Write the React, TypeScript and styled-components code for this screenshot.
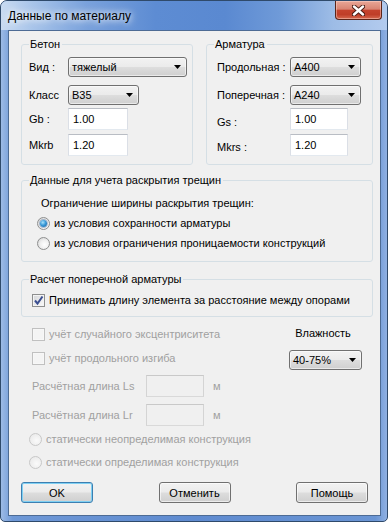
import { FC, ReactNode } from "react";
import styled, { createGlobalStyle, css } from "styled-components";

const colors = {
  face: "#f0f0f0",
  text: "#000000",
  disabled: "#a0a0a0",
  groupLine: "#d5dfe5",
  frameDark: "#2f4a6b",
};

const GlobalStyle = createGlobalStyle`
  html, body {
    margin: 0;
    padding: 0;
    background: #ffffff;
  }
  body {
    font-family: "Liberation Sans", Arial, sans-serif;
    font-size: 11px;
    color: ${colors.text};
  }
  * {
    box-sizing: border-box;
  }
`;

const Window = styled.div`
  width: 388px;
  height: 522px;
  display: flex;
  flex-direction: column;
  border: 1px solid ${colors.frameDark};
  border-radius: 7px 7px 5px 5px;
  overflow: hidden;
  background: linear-gradient(90deg, #9dbbe6 0%, #6e98d6 3%, #5f8bd0 50%, #6a95d4 97%, #8fb0e2 100%);
`;

const TitleBar = styled.div`
  height: 29px;
  flex: none;
  display: flex;
  align-items: flex-start;
  padding-left: 7px;
  background: linear-gradient(
    90deg,
    #c9dbf1 0%,
    #a9c5ea 8%,
    #7aa2dc 22%,
    #5d8cd3 40%,
    #5a89d1 58%,
    #6f9ad8 72%,
    #9dbce6 86%,
    #b3cbee 100%
  );
`;

const Title = styled.span`
  font-size: 12px;
  line-height: 30px;
  color: #000;
  text-shadow: 0 0 6px #ffffff, 0 0 10px rgba(255, 255, 255, 0.9);
`;

const CloseButton = styled.div`
  margin-left: auto;
  margin-right: 5px;
  width: 47px;
  height: 19px;
  display: flex;
  align-items: center;
  justify-content: center;
  border: 1px solid #5b2519;
  border-top: none;
  border-radius: 0 0 4px 4px;
  background: linear-gradient(#e9a797 0%, #d98473 45%, #c5432d 52%, #bf3e28 75%, #d5694f 100%);
  box-shadow: inset 0 0 0 1px rgba(255, 220, 210, 0.45);
`;

const CloseGlyph: FC = () => (
  <svg width="13" height="11" viewBox="0 0 13 11">
    <path d="M2 1.5 L11 9.5 M11 1.5 L2 9.5" stroke="#4a1d15" strokeWidth="4.4" strokeLinecap="round" />
    <path d="M2 1.5 L11 9.5 M11 1.5 L2 9.5" stroke="#ffffff" strokeWidth="2.4" strokeLinecap="round" />
  </svg>
);

const Client = styled.div`
  flex: 1;
  margin: 0 6px 5px 7px;
  border: 1px solid #4d6b94;
  background: ${colors.face};
  display: flex;
  flex-direction: column;
  padding: 7px 7px 0 12px;
`;

const TopRow = styled.div`
  display: flex;
  gap: 13px;
`;

const Group = styled.fieldset<{ $w?: number; $mt?: number; $pt: number; $pb: number }>`
  margin: ${(p) => p.$mt ?? 0}px 0 0 0;
  min-width: 0;
  border: 1px solid ${colors.groupLine};
  border-radius: 3px;
  padding: ${(p) => p.$pt}px 7px ${(p) => p.$pb}px 7px;
  ${(p) =>
    p.$w &&
    css`
      width: ${p.$w}px;
    `}
`;

const Legend = styled.legend`
  padding: 0 2px 0 1px;
  margin: 0;
  line-height: 13px;
  font-size: 11px;
`;

const FieldRow = styled.div<{ $mt?: number; $indent?: number }>`
  display: flex;
  align-items: center;
  margin-top: ${(p) => p.$mt ?? 0}px;
  padding-left: ${(p) => p.$indent ?? 0}px;
`;

const FieldLabel = styled.span<{ $w: number; $disabled?: boolean; $drop?: number }>`
  width: ${(p) => p.$w}px;
  flex: none;
  white-space: nowrap;
  padding-top: ${(p) => (p.$drop ?? 0) * 2}px;
  color: ${(p) => (p.$disabled ? colors.disabled : colors.text)};
`;

const Combo = styled.div<{ $w: number }>`
  width: ${(p) => p.$w}px;
  height: 20px;
  flex: none;
  display: flex;
  align-items: center;
  padding: 0 5px 0 3px;
  border: 1px solid #707070;
  border-radius: 3px;
  background: linear-gradient(#f2f2f2 0%, #ebebeb 48%, #dddddd 52%, #cfcfcf 100%);
  box-shadow: inset 0 0 0 1px rgba(255, 255, 255, 0.55);
`;

const ComboText = styled.span`
  flex: 1;
  white-space: nowrap;
`;

const ComboArrow: FC = () => (
  <svg width="7" height="4" viewBox="0 0 7 4">
    <polygon points="0,0 7,0 3.5,4" fill="#000" />
  </svg>
);

const Edit = styled.div<{ $w: number; $disabled?: boolean }>`
  width: ${(p) => p.$w}px;
  height: 22px;
  flex: none;
  display: flex;
  align-items: center;
  padding-left: 4px;
  border: 1px solid;
  border-color: ${(p) =>
    p.$disabled ? "#c9c9c9 #d4d4d4 #d9d9d9 #d4d4d4" : "#b9bdc4 #dbdfe6 #e3e9ef #dbdfe6"};
  background: ${(p) => (p.$disabled ? colors.face : "#ffffff")};
`;

const OptionRow = styled.label<{ $h: number; $indent: number; $disabled?: boolean }>`
  height: ${(p) => p.$h}px;
  display: flex;
  align-items: center;
  gap: 4px;
  padding-left: ${(p) => p.$indent}px;
  white-space: nowrap;
  color: ${(p) => (p.$disabled ? colors.disabled : colors.text)};
`;

const CheckBox = styled.span<{ $disabled?: boolean }>`
  width: 13px;
  height: 13px;
  flex: none;
  display: flex;
  align-items: center;
  justify-content: center;
  border: 1px solid ${(p) => (p.$disabled ? "#c0c0c0" : "#8e8f8f")};
  background: ${(p) =>
    p.$disabled ? "#f4f4f4" : "linear-gradient(135deg, #d4d6d9 0%, #ececed 60%, #fbfbfb 100%)"};
  box-shadow: inset 0 0 0 1px ${(p) => (p.$disabled ? "#f7f7f7" : "#f4f4f4")};
`;

const CheckMark: FC = () => (
  <svg width="11" height="11" viewBox="0 0 11 11">
    <path d="M2 5.5 L4.5 8.5 L9.5 1.5" fill="none" stroke="#3b4f91" strokeWidth="2" />
  </svg>
);

const Radio = styled.span<{ $disabled?: boolean }>`
  width: 13px;
  height: 13px;
  flex: none;
  display: flex;
  align-items: center;
  justify-content: center;
  border-radius: 50%;
  border: 1px solid ${(p) => (p.$disabled ? "#c8c8c8" : "#8e8f8f")};
  background: ${(p) =>
    p.$disabled
      ? "radial-gradient(circle at 60% 60%, #fafafa 0%, #ececec 70%, #e2e2e2 100%)"
      : "radial-gradient(circle at 60% 60%, #ffffff 0%, #f0f0f0 45%, #cdcdcd 100%)"};
`;

const RadioDot = styled.span`
  width: 7px;
  height: 7px;
  border-radius: 50%;
  background: radial-gradient(circle at 40% 35%, #a9e2fb 0%, #3a9ad8 45%, #175d9e 100%);
  box-shadow: 0 0 0 1px rgba(30, 80, 140, 0.35);
`;

const Hint = styled.div`
  height: 21px;
  display: flex;
  align-items: center;
  padding-left: 12px;
`;

const LowerArea = styled.div`
  display: flex;
  margin-right: -7px;
  margin-left: -12px;
`;

const LeftCol = styled.div`
  flex: 1;
  display: flex;
  flex-direction: column;
  padding-top: 7px;
`;

const RightCol = styled.div`
  width: 73px;
  margin-right: 18px;
  padding-top: 6px;
  display: flex;
  flex-direction: column;
  align-items: center;
  gap: 7px;
`;

const Caption = styled.span`
  line-height: 20px;
  padding-right: 5px;
`;

const Unit = styled.span`
  margin-left: 9px;
  color: ${colors.disabled};
`;

const Buttons = styled.div`
  display: flex;
  justify-content: space-between;
  margin: auto 5px 12px 0;
`;

const Button = styled.button<{ $default?: boolean }>`
  width: 72px;
  height: 21px;
  padding: 0;
  font: inherit;
  color: ${colors.text};
  border: 1px solid ${(p) => (p.$default ? "#3c7fb1" : "#707070")};
  border-radius: 3px;
  background: linear-gradient(#f2f2f2 0%, #ebebeb 48%, #dddddd 52%, #cfcfcf 100%);
  box-shadow: inset 0 0 0 1px ${(p) => (p.$default ? "#7fd0f3" : "rgba(255, 255, 255, 0.6)")};
`;

type OptionProps = {
  kind: "check" | "radio";
  checked?: boolean;
  disabled?: boolean;
  h?: number;
  indent: number;
  children: ReactNode;
};

const Option: FC<OptionProps> = ({ kind, checked, disabled, h = 20, indent, children }) => (
  <OptionRow $h={h} $indent={indent} $disabled={disabled}>
    {kind === "check" ? (
      <CheckBox $disabled={disabled}>{checked && <CheckMark />}</CheckBox>
    ) : (
      <Radio $disabled={disabled}>{checked && <RadioDot />}</Radio>
    )}
    <span>{children}</span>
  </OptionRow>
);

const Select: FC<{ w: number; value: string }> = ({ w, value }) => (
  <Combo $w={w}>
    <ComboText>{value}</ComboText>
    <ComboArrow />
  </Combo>
);

const App: FC = () => (
  <>
    <GlobalStyle />
    <Window>
      <TitleBar>
        <Title>Данные по материалу</Title>
        <CloseButton>
          <CloseGlyph />
        </CloseButton>
      </TitleBar>
      <Client>
        <TopRow>
          <Group $w={172} $pt={6} $pb={8}>
            <Legend>Бетон</Legend>
            <FieldRow>
              <FieldLabel $w={39}>Вид :</FieldLabel>
              <Select w={119} value="тяжелый" />
            </FieldRow>
            <FieldRow $mt={8}>
              <FieldLabel $w={39}>Класс</FieldLabel>
              <Select w={71} value="B35" />
            </FieldRow>
            <FieldRow $mt={3}>
              <FieldLabel $w={39}>Gb :</FieldLabel>
              <Edit $w={60}>1.00</Edit>
            </FieldRow>
            <FieldRow $mt={4}>
              <FieldLabel $w={39}>Mkrb</FieldLabel>
              <Edit $w={60}>1.20</Edit>
            </FieldRow>
          </Group>
          <Group $w={167} $pt={6} $pb={8}>
            <Legend>Арматура</Legend>
            <FieldRow $indent={3}>
              <FieldLabel $w={73}>Продольная :</FieldLabel>
              <Select w={71} value="A400" />
            </FieldRow>
            <FieldRow $mt={8} $indent={3}>
              <FieldLabel $w={73}>Поперечная :</FieldLabel>
              <Select w={71} value="A240" />
            </FieldRow>
            <FieldRow $mt={3} $indent={3}>
              <FieldLabel $w={73} $drop={3}>
                Gs :
              </FieldLabel>
              <Edit $w={58}>1.00</Edit>
            </FieldRow>
            <FieldRow $mt={4} $indent={3}>
              <FieldLabel $w={73} $drop={2}>
                Mkrs :
              </FieldLabel>
              <Edit $w={58}>1.20</Edit>
            </FieldRow>
          </Group>
        </TopRow>

        <Group $mt={9} $pt={5} $pb={8}>
          <Legend>Данные для учета раскрытия трещин</Legend>
          <Hint>Ограничение ширины раскрытия трещин:</Hint>
          <Option kind="radio" checked indent={8}>
            из условия сохранности арматуры
          </Option>
          <Option kind="radio" indent={8}>
            из условия ограничения проницаемости конструкций
          </Option>
        </Group>

        <Group $mt={11} $pt={4} $pb={6}>
          <Legend>Расчет поперечной арматуры</Legend>
          <Option kind="check" checked indent={3}>
            Принимать длину элемента за расстояние между опорами
          </Option>
        </Group>

        <LowerArea>
          <LeftCol>
            <Option kind="check" disabled indent={23}>
              учёт случайного эксцентриситета
            </Option>
            <FieldRow $mt={4}>
              <Option kind="check" disabled indent={23}>
                учёт продольного изгиба
              </Option>
            </FieldRow>
            <FieldRow $mt={7} $indent={23}>
              <FieldLabel $w={114} $disabled>
                Расчётная длина Ls
              </FieldLabel>
              <Edit $w={58} $disabled />
              <Unit>м</Unit>
            </FieldRow>
            <FieldRow $mt={7} $indent={23}>
              <FieldLabel $w={114} $disabled>
                Расчётная длина Lr
              </FieldLabel>
              <Edit $w={58} $disabled />
              <Unit>м</Unit>
            </FieldRow>
            <FieldRow $mt={3}>
              <Option kind="radio" disabled indent={20}>
                статически неопределимая конструкция
              </Option>
            </FieldRow>
            <FieldRow $mt={3}>
              <Option kind="radio" disabled indent={20}>
                статически определимая конструкция
              </Option>
            </FieldRow>
          </LeftCol>
          <RightCol>
            <Caption>Влажность</Caption>
            <Select w={73} value="40-75%" />
          </RightCol>
        </LowerArea>

        <Buttons>
          <Button $default>OK</Button>
          <Button>Отменить</Button>
          <Button>Помощь</Button>
        </Buttons>
      </Client>
    </Window>
  </>
);

export default App;
